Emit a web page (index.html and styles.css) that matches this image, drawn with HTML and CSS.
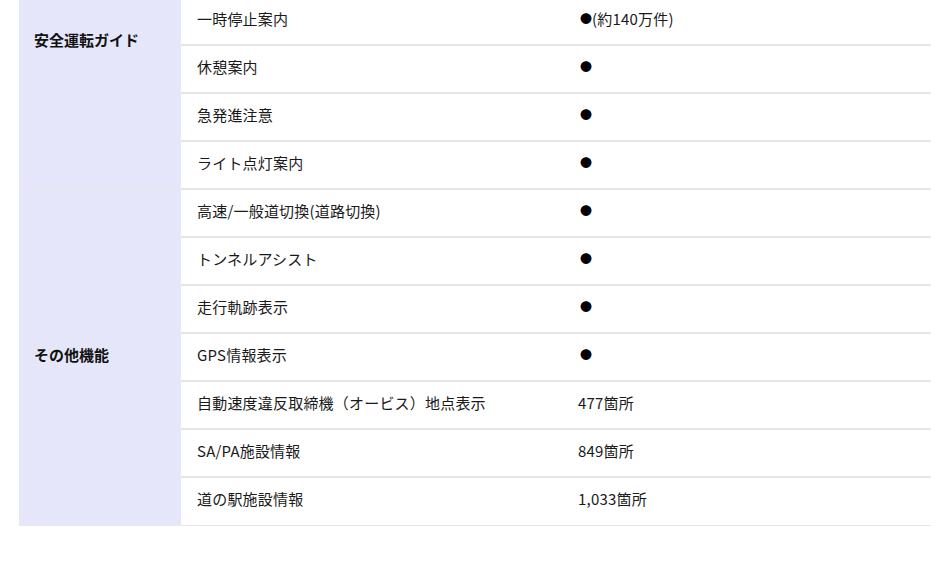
FILE: index.html
```html
<!DOCTYPE html>
<html lang="ja">
<head>
<meta charset="utf-8">
<link rel="stylesheet" href="styles.css">
</head>
<body>
<div class="wrap">
<table class="spec">
  <colgroup><col class="c1"><col class="c2"><col class="c3"></colgroup>
  <tbody>
    <tr><th rowspan="4" class="top">安全運転ガイド</th><td>一時停止案内</td><td><span class="dot">●</span>(約140万件)</td></tr>
    <tr><td>休憩案内</td><td><span class="dot">●</span></td></tr>
    <tr><td>急発進注意</td><td><span class="dot">●</span></td></tr>
    <tr><td>ライト点灯案内</td><td><span class="dot">●</span></td></tr>
    <tr><th rowspan="7">その他機能</th><td>高速/一般道切換(道路切換)</td><td><span class="dot">●</span></td></tr>
    <tr><td>トンネルアシスト</td><td><span class="dot">●</span></td></tr>
    <tr><td>走行軌跡表示</td><td><span class="dot">●</span></td></tr>
    <tr><td>GPS情報表示</td><td><span class="dot">●</span></td></tr>
    <tr><td>自動速度違反取締機（オービス）地点表示</td><td>477箇所</td></tr>
    <tr><td>SA/PA施設情報</td><td>849箇所</td></tr>
    <tr class="last"><td>道の駅施設情報</td><td>1,033箇所</td></tr>
  </tbody>
</table>
</div>
</body>
</html>
```
FILE: styles.css
```css
html, body {
  margin: 0;
  padding: 0;
  background: #fff;
}
body {
  font-family: "Noto Sans CJK JP", "Noto Sans", sans-serif;
  font-size: 15px;
  color: #1a1a1a;
}
.wrap {
  padding-left: 19px;
  margin-top: -3px;
}
.spec {
  border-collapse: collapse;
  width: 912px;
  table-layout: fixed;
}
.c1 { width: 162px; }
.c2 { width: 381px; }
.c3 { width: 369px; }
.spec tr { height: 48px; }
.spec th {
  background: #e6e6fa;
  text-align: left;
  font-weight: bold;
  padding: 0 10px 4px 15px;
  border-bottom: 1px solid #ece8ee;
  vertical-align: middle;
  line-height: 20px;
  color: #111;
}
.spec th.top {
  vertical-align: top;
  padding-top: 33px;
}
.spec td {
  padding: 0 16px 4px;
  border-bottom: 2px solid #e6e6e6;
  vertical-align: middle;
  line-height: 20px;
  letter-spacing: 0.2px;
}
.spec tr.last td { border-bottom-width: 1px; }
.dot {
  font-size: 12px;
  vertical-align: 1px;
  margin-left: 2px;
  color: #000;
  letter-spacing: 0;
}
```
